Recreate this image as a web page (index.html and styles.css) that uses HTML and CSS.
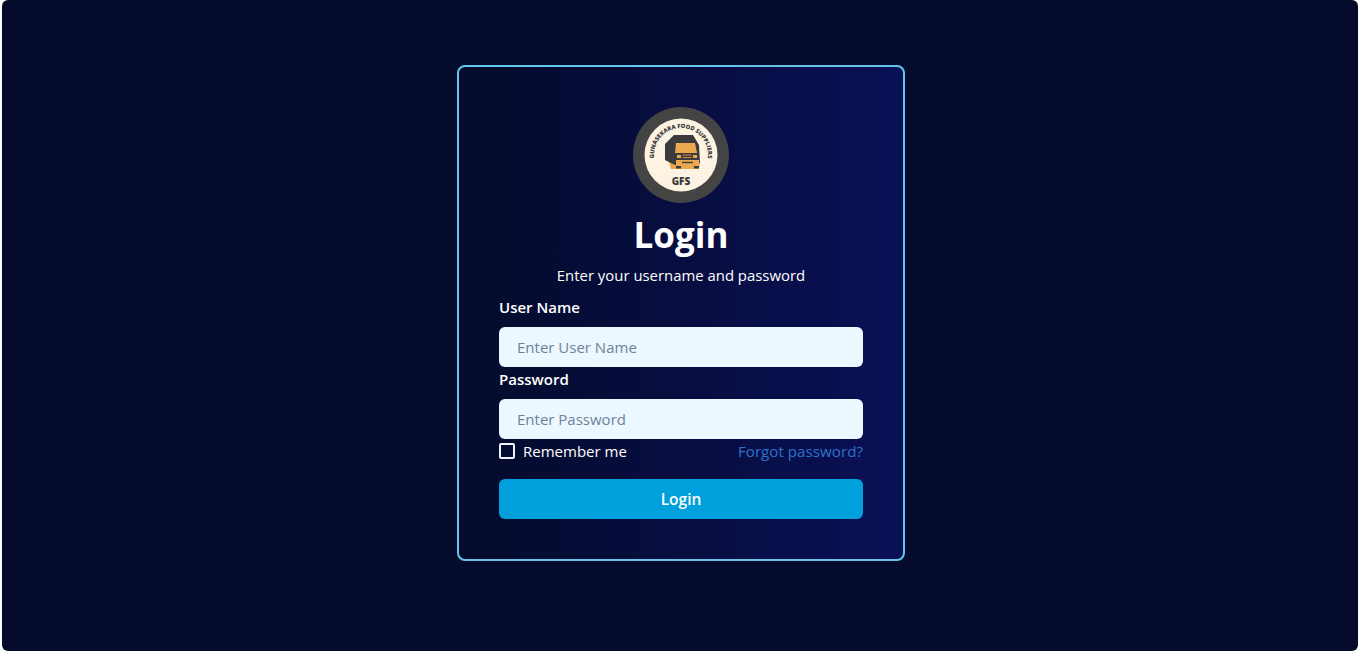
FILE: index.html
```html
<!DOCTYPE html>
<html lang="en">
<head>
    <meta charset="UTF-8">
    <meta name="viewport" content="width=device-width, initial-scale=1.0">
    <title>Login</title>
    <link rel="stylesheet" href="styles.css">
</head>
<body>
    <main class="page">
        <form class="card">
            <svg class="logo" viewBox="0 0 96 96" aria-label="GFS logo">
                <defs>
                    <path id="logo-arc" d="M21.8 54.5 A27 27 0 1 1 74.2 54.5"></path>
                </defs>
                <circle cx="48" cy="48" r="48" fill="#444444"></circle>
                <circle cx="48" cy="48" r="36.5" fill="#fdf3e3"></circle>
                <text class="logo-ring"><textPath href="#logo-arc" startOffset="50%" text-anchor="middle">GUNASEKARA FOOD SUPPLIERS</textPath></text>
                <!-- truck -->
                <path d="M35 52 L42 54 L42 62 L38 62 Z" fill="#e9a752"></path>
                <path d="M42 56 L67 56 L66 62 L42 62 Z" fill="#e9a752"></path>
                <path d="M32 37 L41 28 L60 28 L66 38 L67 56 L42 58 L32 53 Z" fill="#3b3a3c"></path>
                <path d="M43 36 L62 36 L64 46 L42 46 Z" fill="#eba94f"></path>
                <path d="M44 48 H48 V51 H44 Z M60 48 H64 V51 H60 Z" fill="#eba94f"></path>
                <path d="M49.5 48 H58.5 M49.5 50.5 H58.5" stroke="#c98d3f" stroke-width="1"></path>
                <path d="M43 53 H66 V59 H43 Z" fill="#eba94f"></path>
                <path d="M49 55.5 H60" stroke="#3b3a3c" stroke-width="1.4"></path>
                <rect x="43" y="59" width="5" height="2.5" fill="#3b3a3c"></rect>
                <rect x="61" y="59" width="5" height="2.5" fill="#3b3a3c"></rect>
                <text class="logo-gfs" x="48" y="77.5" text-anchor="middle">GFS</text>
            </svg>
            <h1 class="title">Login</h1>
            <p class="subtitle">Enter your username and password</p>

            <label class="field-label" for="username">User Name</label>
            <input class="field-input" id="username" type="text" placeholder="Enter User Name">

            <label class="field-label" for="password">Password</label>
            <input class="field-input" id="password" type="password" placeholder="Enter Password">

            <div class="options">
                <label class="remember">
                    <span class="checkbox"></span>
                    Remember me
                </label>
                <a class="forgot" href="#">Forgot password?</a>
            </div>

            <button class="submit" type="button">Login</button>
        </form>
    </main>
</body>
</html>
```

FILE: styles.css
```css
* {
    box-sizing: border-box;
}

body {
    margin: 0;
    background: #ffffff;
    font-family: 'Open Sans', 'Noto Sans', sans-serif;
    color: #ffffff;
}

.page {
    height: 651px;
    margin-left: 2px;
    padding-top: 65px;
    padding-left: 2px;
    display: flex;
    justify-content: center;
    align-items: flex-start;
    background: #040b2b;
    border-radius: 6px;
    overflow: hidden;
}

.card {
    width: 448px;
    height: 496px;
    padding: 40px;
    display: flex;
    flex-direction: column;
    border: 2px solid #63c5ea;
    border-radius: 8px;
    background: linear-gradient(to right, #040b2b, #0a1055);
}

.logo {
    width: 96px;
    height: 96px;
    align-self: center;
    flex: none;
}

.logo-ring {
    font-size: 5.8px;
    font-weight: 800;
    fill: #3a3a3a;
}

.logo-gfs {
    font-size: 10px;
    font-weight: 800;
    fill: #3a3a3a;
}

.title {
    margin: 12px 0 0;
    font-size: 35px;
    line-height: 40px;
    font-weight: 700;
    text-align: center;
}

.subtitle {
    margin: 8px 0 8px;
    font-size: 14.9px;
    line-height: 24px;
    text-align: center;
}

.field-label {
    height: 32px;
    font-size: 15px;
    line-height: 24px;
    font-weight: 600;
}

.field-input {
    height: 40px;
    padding: 0 18px;
    border: 0;
    border-radius: 6px;
    background: #ebf8ff;
    font-family: inherit;
    font-size: 15px;
    flex: none;
}

.field-input::placeholder {
    color: #71809a;
    opacity: 1;
}

.options {
    height: 24px;
    display: flex;
    justify-content: space-between;
    align-items: center;
    font-size: 15px;
    flex: none;
}

.remember {
    display: flex;
    align-items: center;
    gap: 8px;
}

.checkbox {
    width: 16px;
    height: 16px;
    border: 2px solid #eef4fa;
    border-radius: 2px;
}

.forgot {
    font-size: 15.2px;
    color: #2a74cc;
    text-decoration: none;
}

.submit {
    margin-top: 16px;
    height: 40px;
    border: 0;
    border-radius: 6px;
    background: #00a0dc;
    color: #ffffff;
    font-family: inherit;
    font-size: 15.5px;
    font-weight: 600;
    flex: none;
}
```
